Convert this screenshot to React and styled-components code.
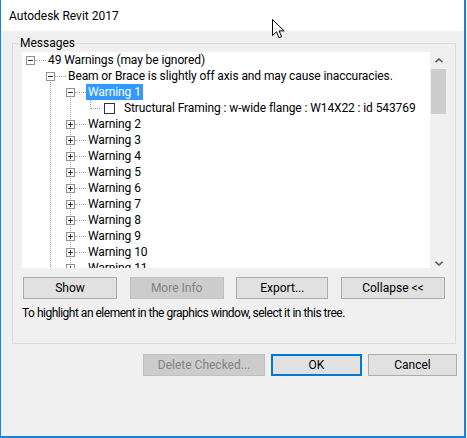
import React from "react";
import styled, { createGlobalStyle, css } from "styled-components";

const GlobalStyle = createGlobalStyle`
  html, body {
    margin: 0;
    padding: 0;
    background: #ffffff;
  }
  body {
    font-family: Roboto, "Liberation Sans", sans-serif;
  }
`;

const FONT = `Roboto, "Liberation Sans", sans-serif`;

const Window = styled.div`
  position: relative;
  width: 466px;
  height: 438px;
  box-sizing: border-box;
  border: solid #1883d7;
  border-width: 0 2px 2px 1px;
  background: #f0f0f0;
  display: flex;
  flex-direction: column;
  font-family: ${FONT};
  font-size: 12px;
  color: #000;
`;

const TitleBar = styled.div`
  height: 31px;
  flex-shrink: 0;
  background: #ffffff;
  display: flex;
  align-items: center;
  padding-left: 8px;
  font-size: 12px;
`;

const Body = styled.div`
  padding: 4px 8px 0 11px;
`;

const Group = styled.fieldset`
  margin: 0;
  padding: 0;
  min-width: 0;
  width: 444px;
  box-sizing: border-box;
  border: 1px solid #dcdcdc;
`;

const Legend = styled.legend`
  margin-left: 6px;
  padding: 0 1px;
  line-height: 16px;
  font-size: 12px;
`;

const GroupInner = styled.div`
  padding: 1px 8px 22px 9px;
  display: flex;
  flex-direction: column;
`;

const Tree = styled.div`
  display: flex;
  height: 216px;
  background: #ffffff;
`;

const TreeList = styled.div`
  flex: 1;
  overflow: hidden;
`;

const Row = styled.div`
  display: flex;
  align-items: center;
  height: 16px;
  white-space: nowrap;
`;

const dotsV = css`
  content: "";
  position: absolute;
  left: 8px;
  width: 1px;
  background: repeating-linear-gradient(to bottom, #a0a0a0 0 1px, transparent 1px 2px);
`;

const Guide = styled.span`
  position: relative;
  flex-shrink: 0;
  width: 20px;
  height: 16px;
  ${(p) =>
    p.$line &&
    css`
      &::before {
        ${dotsV};
        top: 0;
        bottom: 0;
      }
    `}
`;

const vertRanges = {
  none: null,
  down: "top: 8px; bottom: 0;",
  up: "top: 0; height: 9px;",
  full: "top: 0; bottom: 0;",
};

const NodeCell = styled.span`
  position: relative;
  flex-shrink: 0;
  width: ${(p) => p.$w}px;
  height: 16px;
  display: flex;
  align-items: center;
  padding-left: 4px;
  box-sizing: border-box;
  ${(p) =>
    vertRanges[p.$vert] &&
    css`
      &::before {
        ${dotsV};
        ${vertRanges[p.$vert]}
      }
    `}
  &::after {
    content: "";
    position: absolute;
    left: 9px;
    right: ${(p) => p.$hEnd}px;
    top: 8px;
    height: 1px;
    background: repeating-linear-gradient(to right, #a0a0a0 0 1px, transparent 1px 2px);
  }
`;

const ToggleSvg = styled.svg`
  position: relative;
  z-index: 1;
  display: block;
`;

const CheckBox = styled.span`
  flex-shrink: 0;
  width: 11px;
  height: 11px;
  box-sizing: border-box;
  border: 1px solid #333333;
  background: #ffffff;
  margin: 0 7px 0 2px;
`;

const Label = styled.span`
  height: 16px;
  line-height: 16px;
  padding: 0 2px;
  font-size: 12px;
  letter-spacing: -0.1px;
  ${(p) =>
    p.$selected &&
    css`
      background: #3399ff;
      color: #ffffff;
    `}
`;

const ScrollBar = styled.div`
  width: 17px;
  flex-shrink: 0;
  background: #f0f0f0;
  display: flex;
  flex-direction: column;
`;

const ArrowBox = styled.div`
  height: 17px;
  display: flex;
  justify-content: center;
  align-items: ${(p) => (p.$down ? "flex-end" : "center")};
  padding-bottom: ${(p) => (p.$down ? "2px" : "0")};
  box-sizing: border-box;
  margin-top: ${(p) => (p.$down ? "auto" : "0")};
`;

const Thumb = styled.div`
  height: 45px;
  margin: 0 1px;
  background: #cdcdcd;
`;

const ButtonRow = styled.div`
  margin-top: 9px;
  display: flex;
  justify-content: space-between;
  padding: 0 2px 0 1px;
`;

const Button = styled.div`
  width: ${(p) => p.$w}px;
  height: 22px;
  box-sizing: border-box;
  display: flex;
  align-items: center;
  justify-content: center;
  border: 1px solid #adadad;
  background: #e1e1e1;
  font-size: 12px;
  color: #000;
  ${(p) =>
    p.$disabled &&
    css`
      border-color: #bfbfbf;
      background: #cccccc;
      color: #838383;
    `}
  ${(p) =>
    p.$default &&
    css`
      border: 2px solid #0078d7;
    `}
`;

const Hint = styled.div`
  margin-top: 6px;
  line-height: 16px;
  font-size: 12px;
  letter-spacing: -0.5px;
`;

const Footer = styled.div`
  margin-top: 10px;
  display: flex;
  justify-content: flex-end;
  gap: 6px;
  padding-right: 7px;
`;

const Pointer = styled.svg`
  position: absolute;
  left: 271px;
  top: 19px;
`;

function Toggle({ open }) {
  return (
    <ToggleSvg width="9" height="9" viewBox="0 0 9 9">
      <rect x="0.5" y="0.5" width="8" height="8" fill="#fff" stroke="#919191" />
      <line x1="2" y1="4.5" x2="7" y2="4.5" stroke="#333" />
      {!open && <line x1="4.5" y1="2" x2="4.5" y2="7" stroke="#333" />}
    </ToggleSvg>
  );
}

function Chevron({ down }) {
  return (
    <svg width="8" height="5" viewBox="0 0 8 5">
      <polyline
        points={down ? "0.5,0.8 4,4 7.5,0.8" : "0.5,4.2 4,1 7.5,4.2"}
        fill="none"
        stroke="#606060"
        strokeWidth="1.6"
      />
    </svg>
  );
}

const rows = [
  { label: "49 Warnings (may be ignored)", guides: [], vert: "none", toggle: "open" },
  {
    label: "Beam or Brace is slightly off axis and may cause inaccuracies.",
    guides: [false],
    vert: "down",
    toggle: "open",
  },
  { label: "Warning 1", guides: [false, true], vert: "down", toggle: "open", selected: true },
  {
    label: "Structural Framing : w-wide flange : W14X22 : id 543769",
    guides: [false, true, true],
    vert: "up",
    check: true,
  },
  ...Array.from({ length: 10 }, (_, i) => ({
    label: `Warning ${i + 2}`,
    guides: [false, true],
    vert: "full",
    toggle: "closed",
  })),
];

function TreeRow({ row }) {
  return (
    <Row>
      {row.guides.map((g, i) => (
        <Guide key={i} $line={g} />
      ))}
      <NodeCell $vert={row.vert} $w={row.check ? 20 : 24} $hEnd={row.check ? 1 : 0}>
        {row.toggle && <Toggle open={row.toggle === "open"} />}
      </NodeCell>
      {row.check && <CheckBox />}
      <Label $selected={row.selected}>{row.label}</Label>
    </Row>
  );
}

export default function App() {
  return (
    <>
      <GlobalStyle />
      <Window>
        <TitleBar>Autodesk Revit 2017</TitleBar>
        <Body>
          <Group>
            <Legend>Messages</Legend>
            <GroupInner>
              <Tree>
                <TreeList>
                  {rows.map((r, i) => (
                    <TreeRow key={i} row={r} />
                  ))}
                </TreeList>
                <ScrollBar>
                  <ArrowBox>
                    <Chevron />
                  </ArrowBox>
                  <Thumb />
                  <ArrowBox $down>
                    <Chevron down />
                  </ArrowBox>
                </ScrollBar>
              </Tree>
              <ButtonRow>
                <Button $w={94}>Show</Button>
                <Button $w={94} $disabled>
                  More Info
                </Button>
                <Button $w={92}>Export...</Button>
                <Button $w={104}>Collapse &lt;&lt;</Button>
              </ButtonRow>
              <Hint>To highlight an element in the graphics window, select it in this tree.</Hint>
            </GroupInner>
          </Group>
        </Body>
        <Footer>
          <Button $w={122} $disabled>
            Delete Checked...
          </Button>
          <Button $w={91} $default>
            OK
          </Button>
          <Button $w={89}>Cancel</Button>
        </Footer>
        <Pointer width="13" height="21" viewBox="0 0 13 21">
          <path
            d="M0.5 0.5 V16.5 L4.5 12.8 L7 18.8 L9.6 17.7 L7.1 11.9 H12.2 Z"
            fill="#fff"
            stroke="#000"
            strokeLinejoin="miter"
          />
        </Pointer>
      </Window>
    </>
  );
}
